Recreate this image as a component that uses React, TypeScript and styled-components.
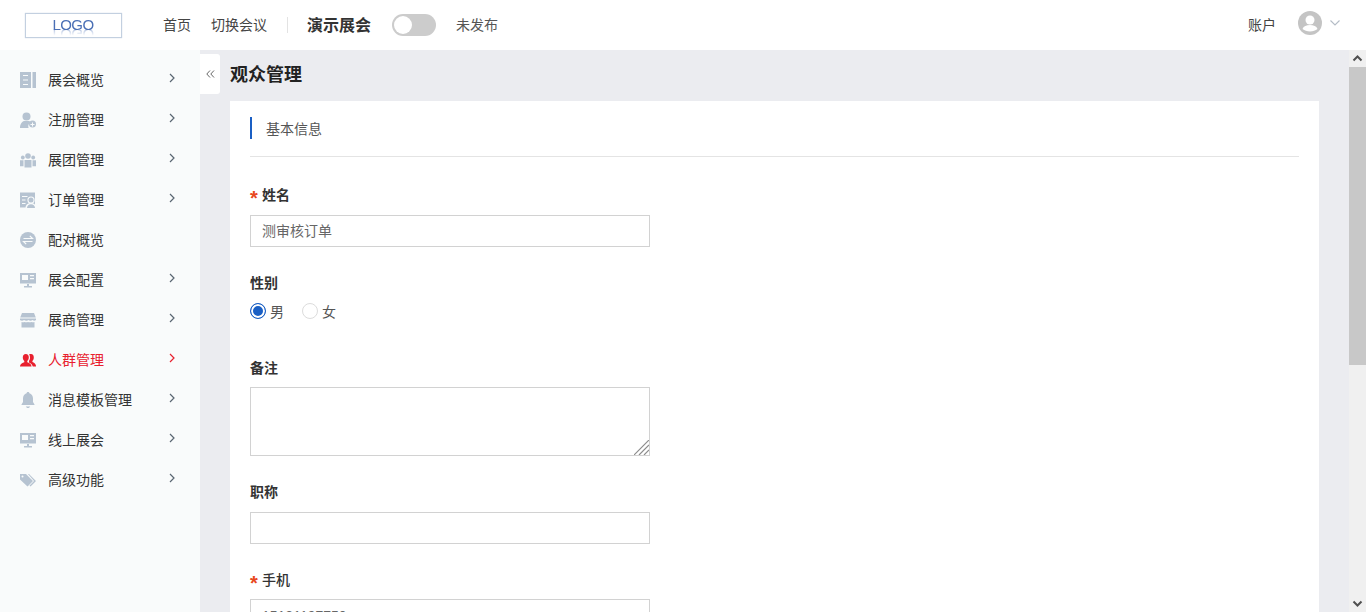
import React from "react";
import styled, { createGlobalStyle } from "styled-components";

const GlobalStyle = createGlobalStyle`
  html, body {
    margin: 0;
    padding: 0;
    height: 100%;
    overflow: hidden;
    font-family: "Liberation Sans", "Noto Sans CJK SC", sans-serif;
    color: #333;
  }
  * { box-sizing: border-box; }
`;

const Shell = styled.div`
  display: flex;
  flex-direction: column;
  height: 100vh;
`;

const Header = styled.header`
  display: flex;
  align-items: center;
  flex: 0 0 50px;
  padding: 0 26px 0 25px;
  background: #fff;
  font-size: 14px;
`;

const LogoBox = styled.div`
  display: flex;
  justify-content: center;
  width: 97px;
  height: 25px;
  margin-right: 41px;
  border: 1px solid #c3d0e0;
  box-shadow: 0 0 1px #c3d0e0;
  overflow: hidden;
`;

const LogoText = styled.span`
  margin-right: 1px;
  font-size: 15px;
  letter-spacing: -0.6px;
  line-height: 21px;
  height: 17px;
  color: #4a6fb5;
  -webkit-box-reflect: below -3px linear-gradient(transparent 55%, rgba(255, 255, 255, 0.5));
`;

const NavLink = styled.a`
  margin: -2px 20px 0 0;
  color: #444;
  white-space: nowrap;
`;

const NavDivider = styled.span`
  width: 1px;
  height: 16px;
  margin-right: 19px;
  background: #e3e3e3;
`;

const EventName = styled.strong`
  margin: -2px 21px 0 0;
  font-size: 16px;
  font-weight: 700;
  color: #333;
`;

const Switch = styled.span`
  display: flex;
  align-items: center;
  width: 44px;
  height: 22px;
  margin-right: 20px;
  padding: 2px;
  border-radius: 11px;
  background: #ccc;

  &::before {
    content: "";
    width: 18px;
    height: 18px;
    border-radius: 50%;
    background: #fff;
  }
`;

const StatusText = styled.span`
  margin-top: -2px;
  color: #555;
`;

const Account = styled.div`
  display: flex;
  align-items: center;
  margin-left: auto;
  color: #444;
`;

const AccountName = styled.span`
  margin: -2px 22px 0 0;
`;

const AvatarIcon = styled.svg`
  width: 24px;
  height: 24px;
  margin: -4px 8px 0 0;
`;

const CaretIcon = styled.svg`
  width: 10px;
  height: 6px;
  margin-top: -4px;
`;

const Body = styled.div`
  display: flex;
  flex: 1;
  min-height: 0;
`;

const Sidebar = styled.nav`
  flex: 0 0 200px;
  padding-top: 10px;
  background: #f9fbfb;
`;

const MenuItem = styled.div<{ $active?: boolean }>`
  display: flex;
  align-items: center;
  height: 40px;
  padding-left: 20px;
  font-size: 14px;
  color: ${({ $active }) => ($active ? "#e8202e" : "#333")};
`;

const MenuIcon = styled.svg<{ $active?: boolean }>`
  flex: 0 0 16px;
  width: 16px;
  height: 16px;
  margin-right: 12px;
  fill: ${({ $active }) => ($active ? "#e8202e" : "#b6c3d1")};
`;

const MenuLabel = styled.span`
  flex: 1;
  margin-top: -2px;
`;

const MenuArrow = styled.svg<{ $active?: boolean }>`
  width: 6px;
  height: 10px;
  margin: -4px 25px 0 0;
  fill: none;
  stroke: ${({ $active }) => ($active ? "#e8202e" : "#5a6672")};
  stroke-width: 1.2;
`;

const Main = styled.main`
  position: relative;
  flex: 1;
  overflow: hidden;
  background: #ebecf0;
`;

const ScrollBar = styled.div`
  display: flex;
  flex-direction: column;
  flex: 0 0 17px;
  background: #f0f0f0;
`;

const ScrollButton = styled.svg`
  display: block;
  flex: 0 0 17px;
  width: 17px;
  height: 17px;
  fill: none;
  stroke: #505050;
  stroke-width: 2;
`;

const ScrollThumb = styled.div`
  flex: 0 0 298px;
  background: #c8c8c8;
`;

const ScrollTrack = styled.div`
  flex: 1;
`;

const CollapseTab = styled.div`
  position: absolute;
  top: 4px;
  left: 0;
  display: flex;
  align-items: center;
  justify-content: center;
  width: 20px;
  height: 40px;
  border-radius: 0 3px 3px 0;
  background: #fff;
`;

const CollapseIcon = styled.svg`
  width: 9px;
  height: 8px;
  fill: none;
  stroke: #666;
  stroke-width: 1;
`;

const Content = styled.div`
  display: flex;
  flex-direction: column;
  height: 996px;
  padding: 0 30px;
`;

const PageTitle = styled.h1`
  flex: 0 0 51px;
  margin: 0;
  font-size: 18px;
  line-height: 50px;
  font-weight: 700;
  color: #222;
`;

const Card = styled.section`
  flex: 1;
  padding: 16px 20px 0;
  background: #fff;
`;

const SectionHead = styled.div`
  display: flex;
  align-items: flex-start;
  height: 40px;
  margin-bottom: 27px;
  border-bottom: 1px solid #e4e4e4;
  font-size: 14px;
  color: #555;
  line-height: 24px;

  &::before {
    content: "";
    width: 2px;
    height: 22px;
    margin-right: 14px;
    background: #1a5fc4;
  }
`;

const Field = styled.div<{ $gap: number }>`
  margin-bottom: ${({ $gap }) => $gap}px;
`;

const Label = styled.label<{ $required?: boolean; $bold?: boolean; $space?: number }>`
  display: flex;
  align-items: center;
  height: 20px;
  margin-bottom: ${({ $space }) => $space ?? 11}px;
  font-size: 14px;
  font-weight: ${({ $bold }) => ($bold ? 700 : 500)};
  color: #333;

  ${({ $required }) =>
    $required &&
    `&::before {
      content: "*";
      width: 12px;
      color: #e8481e;
      font-size: 20px;
      font-weight: 700;
      line-height: 20px;
      transform: translateY(4px);
    }`}
`;

const TextInput = styled.input`
  display: block;
  width: 400px;
  height: 32px;
  padding: 0 11px 2px;
  border: 1px solid #d2d2d2;
  outline: none;
  font: inherit;
  font-size: 14px;
  color: #666;
  background: #fff;
`;

const PhoneInput = styled(TextInput)`
  padding: 1px 11px 0;
`;

const TextAreaWrap = styled.div`
  position: relative;
  width: 400px;
  height: 69px;
`;

const TextArea = styled.textarea`
  display: block;
  width: 100%;
  height: 100%;
  padding: 6px 11px;
  border: 1px solid #d2d2d2;
  outline: none;
  resize: none;
  font: inherit;
  font-size: 14px;
  background: #fff;
`;

const ResizeGrip = styled.svg`
  position: absolute;
  right: 1px;
  bottom: 1px;
  width: 15px;
  height: 15px;
  stroke: #8c8c8c;
  stroke-width: 1.2;
`;

const RadioRow = styled.div`
  display: flex;
  gap: 18px;
  height: 16px;
`;

const RadioOption = styled.span`
  display: flex;
  align-items: flex-start;
  gap: 4px;
  font-size: 14px;
  line-height: 18px;
  color: #555;
`;

const RadioDot = styled.span<{ $checked?: boolean }>`
  width: 16px;
  height: 16px;
  border-radius: 50%;
  border: 1px solid ${({ $checked }) => ($checked ? "#1a5fc4" : "#dcdcdc")};
  background: ${({ $checked }) => ($checked ? "#1a5fc4" : "#fff")};
  box-shadow: ${({ $checked }) => ($checked ? "inset 0 0 0 2px #fff" : "none")};
`;

type IconProps = { $active?: boolean };

const icons: Record<string, React.ReactNode> = {
  overview: (
    <path
      fillRule="evenodd"
      d="M0 0h11v16H0zM12.500 0H16v16h-3.500zM3 3v1h5V3zM3 7.500v1h5v-1zM3 12v1h5v-1z"
    />
  ),
  register: (
    <>
      <circle cx="6.500" cy="4.500" r="4" />
      <path d="M0 16c0-4 2-6.500 4-7h5c.8.300 1.400.800 2 1.400A4.500 4.500 0 0 0 8.600 16z" />
      <path
        fillRule="evenodd"
        d="M12.500 8.500a3.500 3.500 0 1 1 0 7 3.500 3.500 0 0 1 0-7zM12 10.500v1.500h-1.500v1H12v1.500h1V13h1.500v-1H13v-1.500z"
      />
    </>
  ),
  team: (
    <>
      <circle cx="8" cy="4" r="2.800" />
      <circle cx="2.800" cy="5.500" r="1.900" />
      <circle cx="13.200" cy="5.500" r="1.900" />
      <path d="M4.500 8h7v7.500h-7zM0 8.200h3.500v6H0zM12.500 8.200H16v6h-3.500z" />
    </>
  ),
  order: (
    <>
      <path d="M0 .500h15v15H0z" />
      <path d="M2 4h5.500v1H2zM2 7.500h3.500v1H2zM2 11h3.500v1H2z" fill="#f9fbfb" />
      <circle cx="11" cy="8" r="3.600" fill="#f9fbfb" />
      <path d="M5.500 16c0-3.500 2.500-5 5.500-5s5 1.500 5 5z" fill="#f9fbfb" />
      <circle cx="11" cy="8" r="2.500" />
      <path d="M7 16c0-2.500 1.800-3.800 4-3.800s4 1.300 4 3.800z" />
    </>
  ),
  pair: (
    <>
      <circle cx="8" cy="8" r="8" />
      <path d="M3.500 6.500h9L9.800 3.800" fill="none" stroke="#f9fbfb" strokeWidth="1.200" />
      <path d="M12.500 9.500h-9l2.700 2.700" fill="none" stroke="#f9fbfb" strokeWidth="1.200" />
    </>
  ),
  screen: (
    <path
      fillRule="evenodd"
      d="M0 1h16v10.500H0zM2 3v5h6V3zM10 3v1.200h4V3zM10 6v1.200h4V6zM7 12h2v2h3v1.500H4V14h3z"
    />
  ),
  store: (
    <path
      fillRule="evenodd"
      d="M2 1h12l1.800 4.500H.200zM0 6.500h16v1.500c-1 1-2.500 1-3.500 0-1 1-3 1-4 0-1 1-3 1-4.500 0-1 1-3 1-4 0zM1.500 10c1 .4 2 .4 3 0 1 .4 2.500.4 3.500 0 1 .4 2.500.4 3.500 0 1 .4 2 .4 3 0v5.500h-13z"
    />
  ),
  crowd: (
    <>
      <path d="M5.800 2c2 0 3 1.500 3 3.500 0 1.500-.6 2.700-1.500 3.500v1.300c1.700.600 3.700 1.500 4.200 3.700v.5H0v-.5C.5 11.800 2.500 10.900 4.300 10.300V9C3.400 8.200 2.800 7 2.800 5.500 2.800 3.500 3.800 2 5.800 2z" />
      <path d="M11 2c1.900 0 2.800 1.500 2.800 3.400 0 1.500-.5 2.700-1.400 3.500v1.200c1.600.6 3.100 1.500 3.600 3.700v.7h-3.200c-.5-2-2-3.200-3.800-4V8.700c.8-.9 1-2 1-3.200 0-1.300-.3-2.400-.9-3.200.6-.2 1.200-.3 1.900-.3z" />
    </>
  ),
  bell: (
    <path d="M8 0c.8 0 1.300.5 1.400 1.200C11.700 1.900 13 4 13 6.500V10l1.500 2.500v.5h-13v-.5L3 10V6.500c0-2.500 1.300-4.600 3.600-5.300C6.700.5 7.200 0 8 0zM5.800 14.500h4.400c-.3.900-1.200 1.500-2.200 1.500s-1.900-.6-2.200-1.500z" />
  ),
  tag: (
    <>
      <path
        fillRule="evenodd"
        d="M0 2h6l7 7-5.500 5.500L0 7.500zM2.500 3.500a1 1 0 1 0 0 2 1 1 0 0 0 0-2z"
      />
      <path d="M8 2h1l7 7-5.500 5.500-1-1L14 9z" />
    </>
  ),
};

const menu = [
  { label: "展会概览", icon: "overview", arrow: true },
  { label: "注册管理", icon: "register", arrow: true },
  { label: "展团管理", icon: "team", arrow: true },
  { label: "订单管理", icon: "order", arrow: true },
  { label: "配对概览", icon: "pair", arrow: false },
  { label: "展会配置", icon: "screen", arrow: true },
  { label: "展商管理", icon: "store", arrow: true },
  { label: "人群管理", icon: "crowd", arrow: true, active: true },
  { label: "消息模板管理", icon: "bell", arrow: true },
  { label: "线上展会", icon: "screen", arrow: true },
  { label: "高级功能", icon: "tag", arrow: true },
];

const Arrow = ({ $active }: IconProps) => (
  <MenuArrow $active={$active} viewBox="0 0 6 10">
    <path d="M1 1l4 4-4 4" />
  </MenuArrow>
);

export default function App() {
  return (
    <Shell>
      <GlobalStyle />
      <Header>
        <LogoBox>
          <LogoText>LOGO</LogoText>
        </LogoBox>
        <NavLink>首页</NavLink>
        <NavLink>切换会议</NavLink>
        <NavDivider />
        <EventName>演示展会</EventName>
        <Switch />
        <StatusText>未发布</StatusText>
        <Account>
          <AccountName>账户</AccountName>
          <AvatarIcon viewBox="0 0 24 24">
            <circle cx="12" cy="12" r="12" fill="#c4c4c4" />
            <circle cx="12" cy="9" r="4.500" fill="#fff" />
            <path d="M4.500 18c1-3 4-4 7.500-4s6.500 1 7.500 4c-2 1.500-4.500 2.500-7.500 2.500S6.500 19.500 4.500 18z" fill="#fff" />
          </AvatarIcon>
          <CaretIcon viewBox="0 0 10 6">
            <path d="M.5.500 5 5 9.500.500" fill="none" stroke="#b4bcc6" strokeWidth="1.100" />
          </CaretIcon>
        </Account>
      </Header>
      <Body>
        <Sidebar>
          {menu.map((item) => (
            <MenuItem key={item.label} $active={item.active}>
              <MenuIcon $active={item.active} viewBox="0 0 16 16">
                {icons[item.icon]}
              </MenuIcon>
              <MenuLabel>{item.label}</MenuLabel>
              {item.arrow && <Arrow $active={item.active} />}
            </MenuItem>
          ))}
        </Sidebar>
        <Main>
          <CollapseTab>
            <CollapseIcon viewBox="0 0 9 8">
              <path d="M4 .500.800 4 4 7.500M8 .500 4.800 4 8 7.500" />
            </CollapseIcon>
          </CollapseTab>
          <Content>
            <PageTitle>观众管理</PageTitle>
            <Card>
              <SectionHead>基本信息</SectionHead>
              <Field $gap={25}>
                <Label $required $bold>姓名</Label>
                <TextInput defaultValue="测审核订单" />
              </Field>
              <Field $gap={38}>
                <Label $bold>性别</Label>
                <RadioRow>
                  <RadioOption>
                    <RadioDot $checked />男
                  </RadioOption>
                  <RadioOption>
                    <RadioDot />女
                  </RadioOption>
                </RadioRow>
              </Field>
              <Field $gap={25}>
                <Label $bold $space={10}>备注</Label>
                <TextAreaWrap>
                  <TextArea />
                  <ResizeGrip viewBox="0 0 15 15">
                    <path d="M0 15 15 0M5 15 15 5M10 15l5-5" />
                  </ResizeGrip>
                </TextAreaWrap>
              </Field>
              <Field $gap={25}>
                <Label $bold>职称</Label>
                <TextInput />
              </Field>
              <Field $gap={25}>
                <Label $required $space={10}>手机</Label>
                <PhoneInput defaultValue="15121197750" />
              </Field>
            </Card>
          </Content>
        </Main>
        <ScrollBar>
          <ScrollButton viewBox="0 0 17 17">
            <path d="M4.500 10.500 8.500 6.500 12.500 10.500" />
          </ScrollButton>
          <ScrollThumb />
          <ScrollTrack />
          <ScrollButton viewBox="0 0 17 17">
            <path d="M4.500 6.500 8.500 10.500 12.500 6.500" />
          </ScrollButton>
        </ScrollBar>
      </Body>
    </Shell>
  );
}
